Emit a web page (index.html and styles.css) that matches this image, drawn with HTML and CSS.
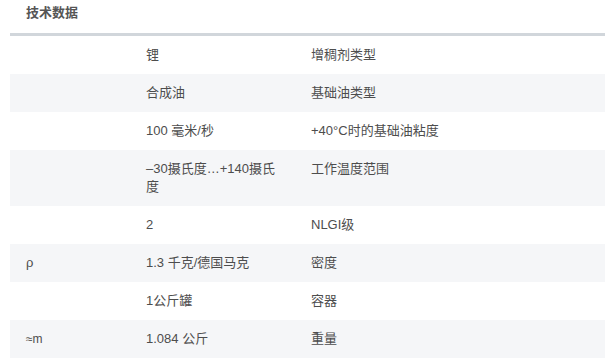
FILE: index.html
```html
<!DOCTYPE html>
<html lang="zh">
<head>
<meta charset="utf-8">
<link rel="stylesheet" href="styles.css">
</head>
<body>
<section class="specs">
  <h2 class="specs-title">技术数据</h2>
  <div class="specs-table">
    <div class="row"><div class="cell"></div><div class="cell">锂</div><div class="cell">增稠剂类型</div></div>
    <div class="row alt"><div class="cell"></div><div class="cell">合成油</div><div class="cell">基础油类型</div></div>
    <div class="row"><div class="cell"></div><div class="cell">100 毫米/秒</div><div class="cell">+40°C时的基础油粘度</div></div>
    <div class="row alt"><div class="cell"></div><div class="cell">–30摄氏度…+140摄氏度</div><div class="cell">工作温度范围</div></div>
    <div class="row"><div class="cell"></div><div class="cell">2</div><div class="cell">NLGI级</div></div>
    <div class="row alt"><div class="cell">ρ</div><div class="cell">1.3 千克/德国马克</div><div class="cell">密度</div></div>
    <div class="row"><div class="cell"></div><div class="cell">1公斤罐</div><div class="cell">容器</div></div>
    <div class="row alt"><div class="cell sym">≈m</div><div class="cell">1.084 公斤</div><div class="cell">重量</div></div>
  </div>
</section>
</body>
</html>
```

FILE: styles.css
```css
html, body {
  margin: 0;
  padding: 0;
  background: #ffffff;
}

body {
  font-family: "Liberation Sans", "Noto Sans CJK SC", sans-serif;
  font-size: 13px;
  line-height: 18px;
  color: #4d4d4d;
}

.specs {
  margin-left: 10px;
}

.specs-title {
  margin: 0;
  padding: 4px 16px 11px;
  font-size: 13px;
  line-height: 18px;
  font-weight: bold;
  color: #555555;
  border-bottom: 3px solid #d1d6db;
}

.specs-table {
  display: flex;
  flex-direction: column;
}

.row {
  display: grid;
  grid-template-columns: 120px 165px 1fr;
}

.row.alt {
  background: #f5f6f8;
}

.cell {
  padding: 10px 11px 10px 16px;
}

.sym {
  font-size: 12px;
}
```
